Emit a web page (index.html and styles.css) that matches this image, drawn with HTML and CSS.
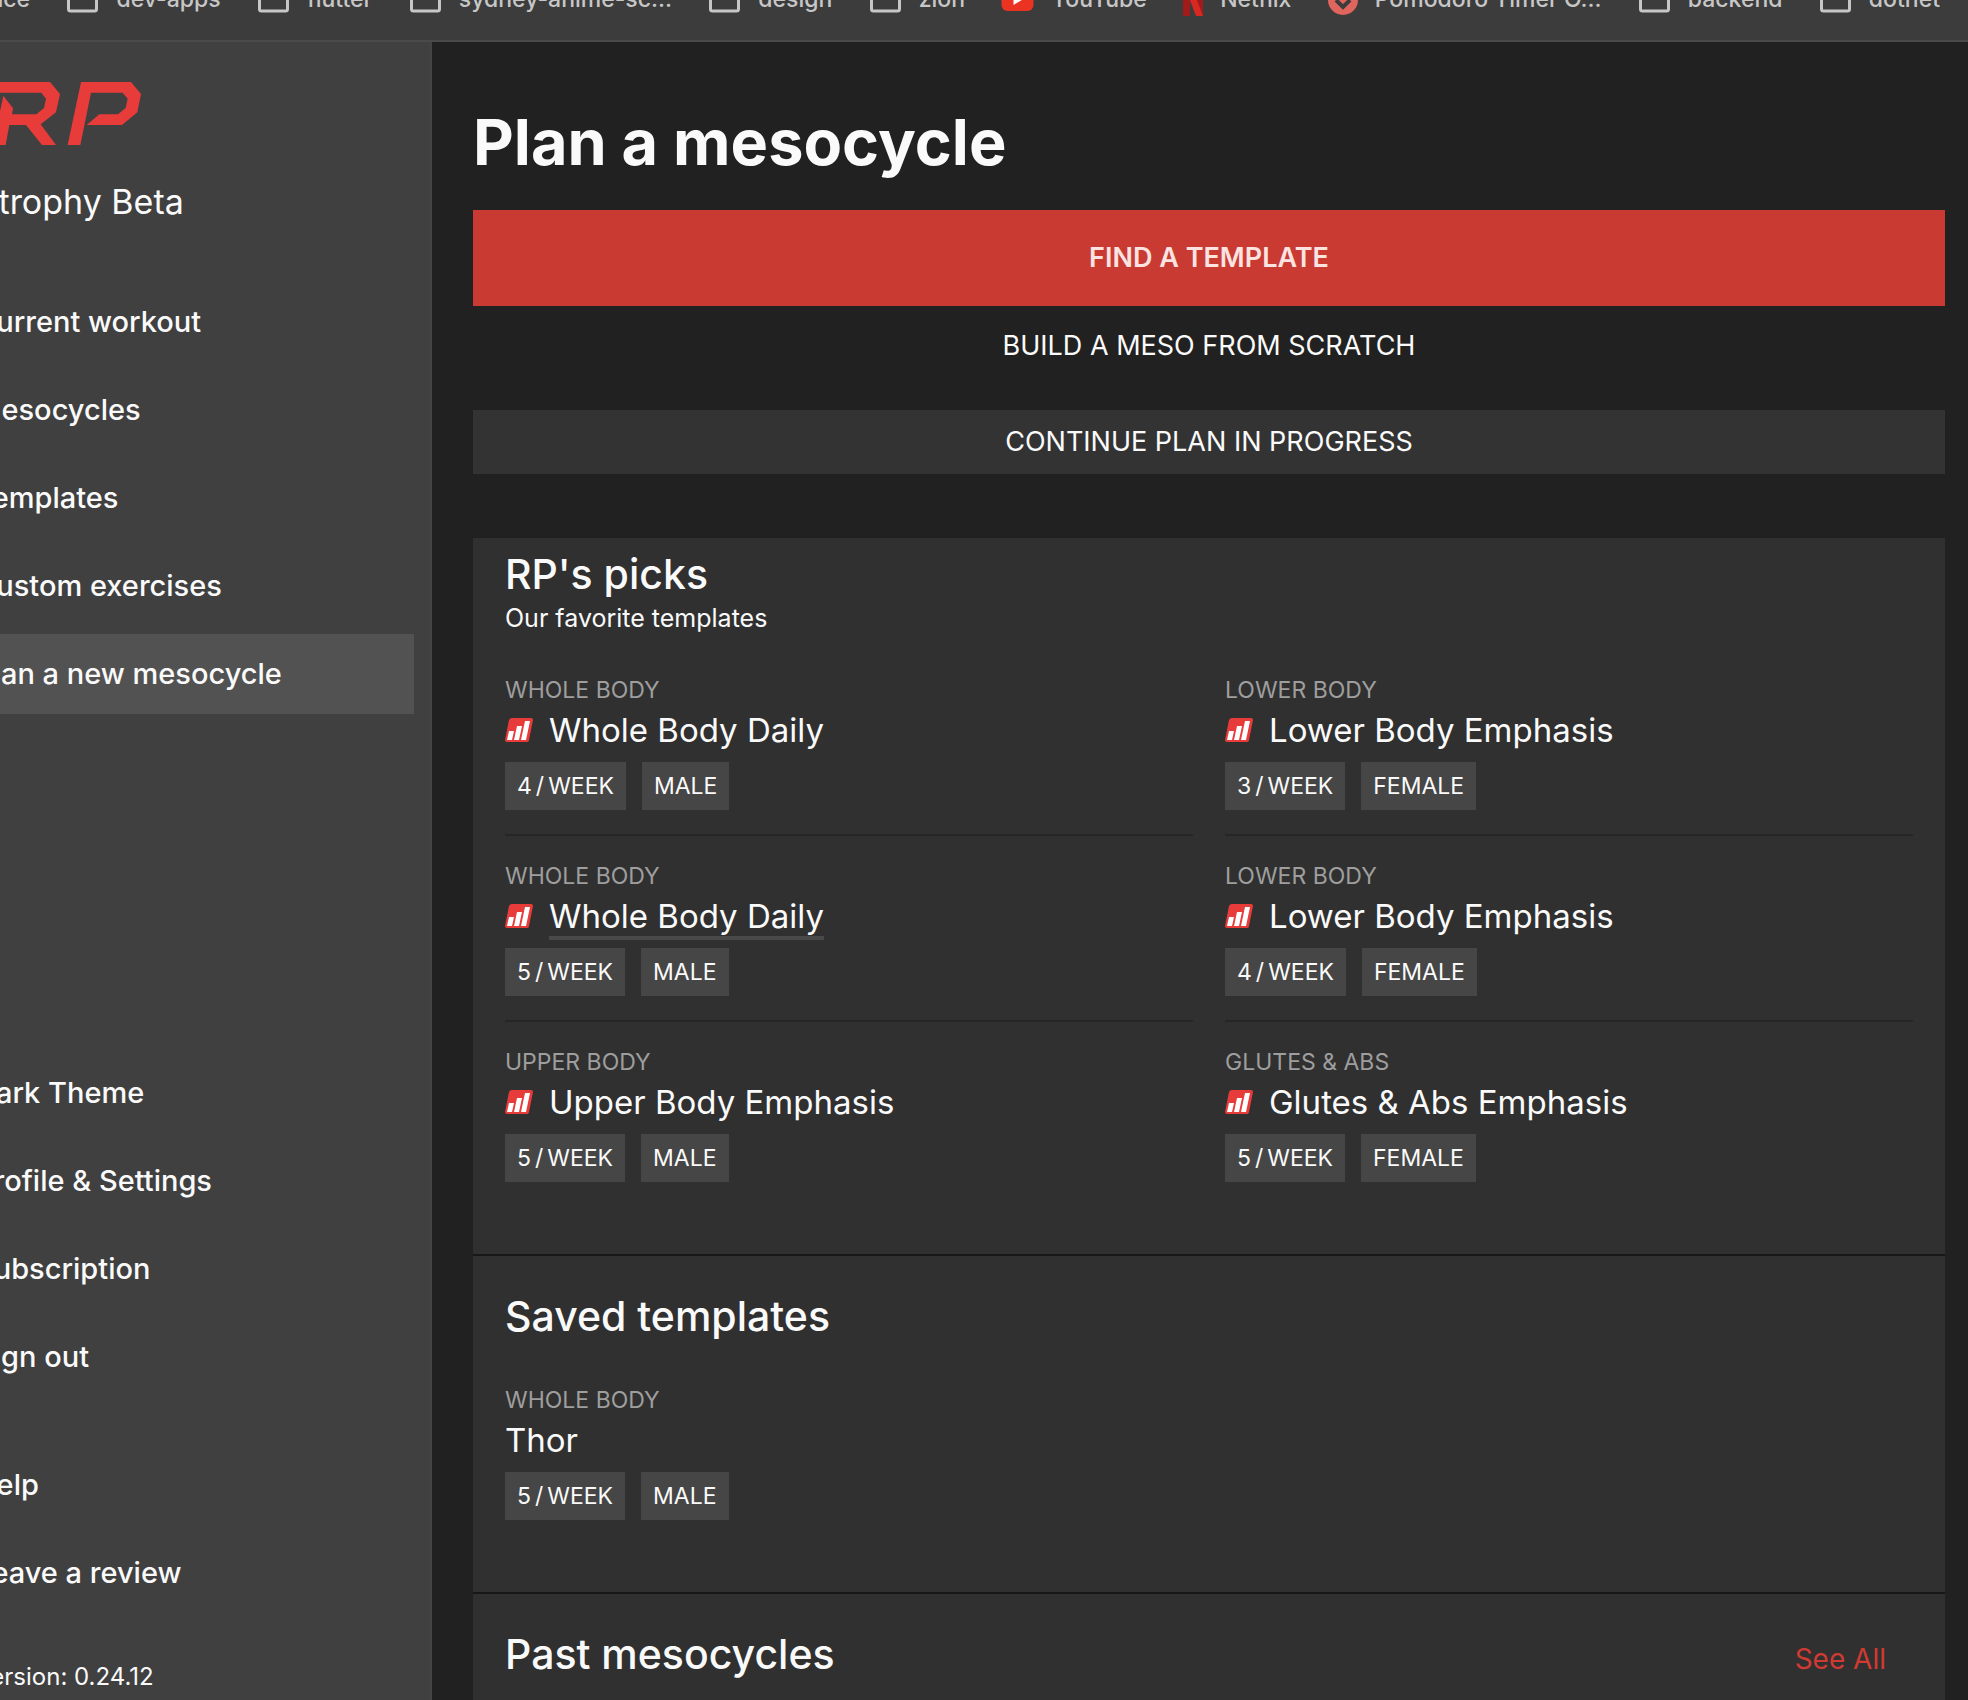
FILE: index.html
```html
<!DOCTYPE html>
<html lang="en">
<head>
<meta charset="utf-8">
<meta name="viewport" content="width=device-width, initial-scale=1">
<title>Plan a mesocycle</title>
<link rel="stylesheet" href="styles.css">
</head>
<body>
<svg class="defs" aria-hidden="true">
  <symbol id="folder" viewBox="0 0 32 28"><path d="M2 5V4a2 2 0 0 1 2-2h8l3 4h13a2 2 0 0 1 2 2v16a2 2 0 0 1-2 2H4a2 2 0 0 1-2-2z" fill="none" stroke="#c7c7c7" stroke-width="3"/></symbol>
  <symbol id="bars" viewBox="0 0 28 24"><path d="M7 0h19q2 0 2 2l-4 20q0 2-3 2H2q-2 0-2-2L4 2q1-2 3-2z" fill="#e83c3a"/><path d="M4 13h5l-2 9H2zM12 8h5l-3 14H9zM20 3h5l-4 19h-5z" fill="#fff"/></symbol>
</svg>
<nav class="bookmarks" aria-label="Bookmarks">
  <a href="#">finance</a>
  <a href="#"><svg class="folder"><use href="#folder"/></svg>dev-apps</a>
  <a href="#"><svg class="folder"><use href="#folder"/></svg>flutter</a>
  <a href="#"><svg class="folder"><use href="#folder"/></svg>sydney-anime-sc...</a>
  <a href="#"><svg class="folder"><use href="#folder"/></svg>design</a>
  <a href="#"><svg class="folder"><use href="#folder"/></svg>zion</a>
  <a href="#"><svg class="folder" viewBox="0 0 32 28"><rect y="2" width="32" height="24" rx="6" fill="#ea3323"/><path d="M12 8l10 6-10 6z" fill="#fff"/></svg>YouTube</a>
  <a href="#"><svg class="netflix" viewBox="0 0 20 34"><path d="M0 0h7v34H0zM13 0h7v34h-7z" fill="#a11b1b"/><path d="M0 0h7l13 34h-7z" fill="#d8281f"/></svg>Netflix</a>
  <a href="#"><svg class="pomodoro" viewBox="0 0 30 32"><circle cx="15" cy="17" r="15" fill="#e0655c"/><path d="M8 17l7 7 7-7" fill="none" stroke="#3c3c3c" stroke-width="4"/></svg>Pomodoro Timer O...</a>
  <a href="#"><svg class="folder"><use href="#folder"/></svg>backend</a>
  <a href="#"><svg class="folder"><use href="#folder"/></svg>dotnet</a>
</nav>
<div class="app">
  <aside class="sidebar">
    <svg class="logo" viewBox="-171 96 594 189" role="img" aria-label="RP"><path d="M-30 96H150L180 132L168 187L122 223L168 285H126L78 225H28L17 285H-21L10 137L39 175L36 193H109L132 174L138 146L124 128H-30zM243 96H393L423 132L412 187L366 225H260L298 193H354L377 174L383 146L368 128H273L241 285H203z" fill="#e83c3a"/></svg>
    <p class="product">Hypertrophy Beta</p>
    <nav class="menu menu-main" aria-label="Main">
      <a href="#">Current workout</a>
      <a href="#">Mesocycles</a>
      <a href="#">Templates</a>
      <a href="#">Custom exercises</a>
      <a href="#" class="current" aria-current="page">Plan a new mesocycle</a>
    </nav>
    <nav class="menu menu-account" aria-label="Account">
      <a href="#">Dark Theme</a>
      <a href="#">Profile &amp; Settings</a>
      <a href="#">Subscription</a>
      <a href="#">Sign out</a>
    </nav>
    <nav class="menu menu-help" aria-label="Support">
      <a href="#">Help</a>
      <a href="#">Leave a review</a>
    </nav>
    <p class="version">Version: 0.24.12</p>
  </aside>
  <main class="content">
    <h1>Plan a mesocycle</h1>
    <button class="button primary" type="button">FIND A TEMPLATE</button>
    <button class="button plain" type="button">BUILD A MESO FROM SCRATCH</button>
    <button class="button muted" type="button">CONTINUE PLAN IN PROGRESS</button>
    <div class="panel">
      <section class="picks">
        <h2>RP's picks</h2>
        <p class="subtitle">Our favorite templates</p>
        <div class="grid">
          <article class="card">
            <p class="label">WHOLE BODY</p>
            <h3><svg class="bars"><use href="#bars"/></svg><a href="#">Whole Body Daily</a></h3>
            <div class="tags"><span class="tag"><span>4</span><span>/</span>WEEK</span><span class="tag">MALE</span></div>
          </article>
          <article class="card">
            <p class="label">LOWER BODY</p>
            <h3><svg class="bars"><use href="#bars"/></svg><a href="#">Lower Body Emphasis</a></h3>
            <div class="tags"><span class="tag"><span>3</span><span>/</span>WEEK</span><span class="tag">FEMALE</span></div>
          </article>
          <article class="card">
            <p class="label">WHOLE BODY</p>
            <h3><svg class="bars"><use href="#bars"/></svg><a href="#" class="underlined">Whole Body Daily</a></h3>
            <div class="tags"><span class="tag"><span>5</span><span>/</span>WEEK</span><span class="tag">MALE</span></div>
          </article>
          <article class="card">
            <p class="label">LOWER BODY</p>
            <h3><svg class="bars"><use href="#bars"/></svg><a href="#">Lower Body Emphasis</a></h3>
            <div class="tags"><span class="tag"><span>4</span><span>/</span>WEEK</span><span class="tag">FEMALE</span></div>
          </article>
          <article class="card last">
            <p class="label">UPPER BODY</p>
            <h3><svg class="bars"><use href="#bars"/></svg><a href="#">Upper Body Emphasis</a></h3>
            <div class="tags"><span class="tag"><span>5</span><span>/</span>WEEK</span><span class="tag">MALE</span></div>
          </article>
          <article class="card last">
            <p class="label">GLUTES &amp; ABS</p>
            <h3><svg class="bars"><use href="#bars"/></svg><a href="#">Glutes &amp; Abs Emphasis</a></h3>
            <div class="tags"><span class="tag"><span>5</span><span>/</span>WEEK</span><span class="tag">FEMALE</span></div>
          </article>
        </div>
      </section>
      <section class="saved">
        <h2>Saved templates</h2>
        <div class="grid">
          <article class="card last">
            <p class="label">WHOLE BODY</p>
            <h3><a href="#">Thor</a></h3>
            <div class="tags"><span class="tag"><span>5</span><span>/</span>WEEK</span><span class="tag">MALE</span></div>
          </article>
        </div>
      </section>
      <section class="past">
        <h2>Past mesocycles</h2>
        <a class="see-all" href="#">See All</a>
      </section>
    </div>
  </main>
</div>
</body>
</html>
```
FILE: styles.css
```css
* { box-sizing: border-box; }

body {
  margin: 0;
  min-height: 100vh;
  display: flex;
  flex-direction: column;
  overflow: hidden;
  background: #212121;
  color: #fafafa;
  font-family: Inter, "Liberation Sans", sans-serif;
}

h1, h2, h3, p { margin: 0; }
a { color: inherit; text-decoration: none; }
.defs { display: none; }

/* Bookmarks bar */
.bookmarks {
  display: flex;
  flex: none;
  align-items: center;
  justify-content: space-between;
  height: 84px;
  margin: -42px 0 0 -52px;
  padding: 0 28px 0 0;
  background: #3c3c3c;
  border-bottom: 2px solid #4a4a4a;
  color: #c7c7c7;
  font-size: 23px;
  font-weight: 500;
  line-height: 32px;
  white-space: nowrap;
}
.bookmarks a { display: flex; align-items: center; gap: 17px; }
.folder { width: 33px; height: 28px; }
.netflix { width: 20px; height: 34px; }
.pomodoro { width: 30px; height: 32px; }

.app { display: flex; flex: 1; }

/* Sidebar, scrolled partly out of view on the left */
.sidebar {
  display: flex;
  flex: none;
  flex-direction: column;
  width: 512px;
  margin-left: -80px;
  padding: 40px 16px 8px 0;
  background: #404040;
  border-right: 2px solid #444;
}
.logo { width: 198px; height: 63px; margin-left: 23px; }
.product { margin: 33px 0 56px -20px; font-size: 34px; line-height: 48px; }
.menu { display: flex; flex-direction: column; gap: 8px; }
.menu a {
  padding-left: 55px;
  font-size: 29px;
  font-weight: 500;
  line-height: 80px;
  white-space: nowrap;
}
.menu .current { background: #525252; }
.menu-account { margin-top: auto; }
.menu-help { margin: 48px 0; }
.version { padding-left: 55px; font-size: 24px; line-height: 32px; }

/* Main column */
.content {
  display: flex;
  flex: 1;
  flex-direction: column;
  min-width: 0;
  padding: 64px 23px 0 41px;
}
h1 { margin-bottom: 32px; font-size: 63px; font-weight: 700; line-height: 72px; }
.button {
  height: 64px;
  padding: 0;
  border: 0;
  background: none;
  color: #fafafa;
  font: 400 27px/40px Inter, "Liberation Sans", sans-serif;
}
.primary { height: 96px; background: #c93a32; color: #fae3e1; font-weight: 600; }
.plain { margin: 8px 0 32px; }
.muted { background: #333; }

.panel { flex: 1; margin-top: 64px; background: #303030; }
section { padding: 36px 32px 48px; border-top: 2px solid #171717; }
.picks { padding-top: 12px; border-top: 0; }
h2 { font-size: 41px; font-weight: 500; line-height: 48px; }
.subtitle { margin: 2px 0 14px; font-size: 25px; line-height: 36px; }
.grid { display: grid; grid-template-columns: 1fr 1fr; column-gap: 32px; }
.card { padding: 24px 0; border-bottom: 2px solid #262626; }
.card.last { border-bottom: 0; }
.label { color: #9e9e9e; font-size: 23px; line-height: 32px; }
h3 {
  display: flex;
  align-items: center;
  gap: 16px;
  height: 40px;
  margin: 4px 0 12px;
  font-size: 33px;
  font-weight: 400;
  line-height: 40px;
}
.bars { width: 28px; height: 24px; }
.underlined { margin-top: 4px; border-bottom: 4px solid #494949; }
.tags { display: flex; gap: 16px; }
.tag {
  display: flex;
  gap: 4px;
  padding: 0 12px;
  background: #464646;
  font-size: 23px;
  line-height: 48px;
}
.saved .grid { margin-top: 20px; }
.past {
  display: flex;
  align-items: baseline;
  justify-content: space-between;
  padding: 36px 59px 22px 32px;
}
.see-all { color: #cf3a32; font-size: 28px; line-height: 40px; }
```
